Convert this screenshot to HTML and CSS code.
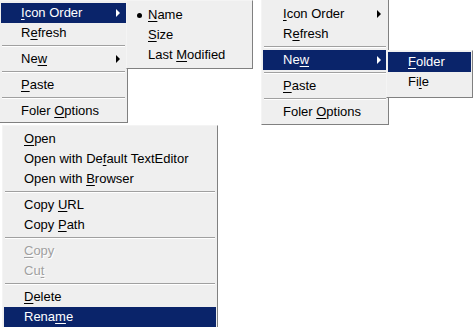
FILE: index.html
```html
<!DOCTYPE html>
<html lang="en">
<head>
    <meta charset="UTF-8">
    <title>Context menus</title>
    <link rel="stylesheet" href="styles.css">
</head>
<body>

    <!-- Меню папки, открыт "Icon Order" -->
    <div class="menu menu-folder-a">
        <div class="item active has-sub"><u>I</u>con Order</div>
        <div class="item">R<u>e</u>fresh</div>
        <div class="sep"></div>
        <div class="item has-sub">Ne<u>w</u></div>
        <div class="sep"></div>
        <div class="item"><u>P</u>aste</div>
        <div class="sep"></div>
        <div class="item">Foler <u>O</u>ptions</div>
    </div>

    <div class="menu menu-order">
        <div class="item checked"><u>N</u>ame</div>
        <div class="item"><u>S</u>ize</div>
        <div class="item">Last <u>M</u>odified</div>
    </div>

    <!-- Меню папки, открыт "New" -->
    <div class="menu menu-folder-b">
        <div class="item has-sub"><u>I</u>con Order</div>
        <div class="item">R<u>e</u>fresh</div>
        <div class="sep"></div>
        <div class="item active has-sub">Ne<u>w</u></div>
        <div class="sep"></div>
        <div class="item"><u>P</u>aste</div>
        <div class="sep"></div>
        <div class="item">Foler <u>O</u>ptions</div>
    </div>

    <div class="menu menu-new">
        <div class="item active"><u>F</u>older</div>
        <div class="item">Fi<u>l</u>e</div>
    </div>

    <!-- Меню файла -->
    <div class="menu menu-file">
        <div class="item"><u>O</u>pen</div>
        <div class="item">Open with De<u>f</u>ault TextEditor</div>
        <div class="item">Open with <u>B</u>rowser</div>
        <div class="sep"></div>
        <div class="item">Copy <u>U</u>RL</div>
        <div class="item">Copy <u>P</u>ath</div>
        <div class="sep"></div>
        <div class="item disabled"><u>C</u>opy</div>
        <div class="item disabled">Cu<u>t</u></div>
        <div class="sep"></div>
        <div class="item"><u>D</u>elete</div>
        <div class="item active">Rena<u>m</u>e</div>
    </div>

</body>
</html>
```

FILE: styles.css
```css
body {
    margin: 0;
    width: 474px;
    height: 327px;
    overflow: hidden;
    position: relative;
    background-color: #fff;
    font-family: "Liberation Sans", Arial, sans-serif;
    font-size: 13px;
    color: #000;
}

/* Окно меню */
.menu {
    position: absolute;
    box-sizing: border-box;
    background-color: #efefef;
    border: 1px solid;
    border-color: #f4f4f4 #808080 #808080 #f4f4f4;
    padding: 2px 1px;
}
.menu-folder-a {
    left: -1px;
    top: 0;
    width: 129px;
    height: 123px;
}
.menu-order {
    left: 126px;
    top: 0;
    width: 127px;
    height: 69px;
    padding-top: 4px;
}
.menu-folder-b {
    left: 261px;
    top: -1px;
    width: 128px;
    height: 126px;
    padding-top: 4px;
}
.menu-new {
    left: 386px;
    top: 50px;
    width: 87px;
    height: 48px;
    padding-top: 1px;
}
.menu-file {
    left: 2px;
    top: 125px;
    width: 216px;
    height: 210px;
    padding-top: 3px;
}

.item {
    position: relative;
    height: 20px;
    line-height: 20px;
    padding-left: 20px;
    white-space: nowrap;
}
.item u {
    text-decoration: underline;
    text-underline-offset: 2px;
}
.item.active {
    background-color: #0a246a;
    color: #fff;
}
.item.disabled {
    color: #a0a0a0;
    text-shadow: 1px 1px 0 #fff;
}

/* Стрелка подменю */
.item.has-sub::after {
    content: "";
    position: absolute;
    right: 6px;
    top: 6px;
    border-style: solid;
    border-width: 4px 0 4px 4px;
    border-color: transparent transparent transparent #000;
}
.item.active.has-sub::after {
    border-left-color: #fff;
}

/* Отметка выбранного пункта */
.item.checked::before {
    content: "";
    position: absolute;
    left: 9px;
    top: 8px;
    width: 5px;
    height: 5px;
    border-radius: 50%;
    background-color: #000;
}

.sep {
    height: 0;
    margin: 2px 1px;
    border-top: 1px solid #a0a0a0;
    border-bottom: 1px solid #fff;
}
```
